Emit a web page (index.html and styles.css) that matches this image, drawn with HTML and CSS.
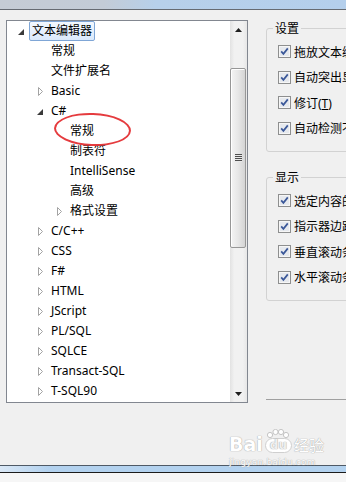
FILE: index.html
```html
<!DOCTYPE html>
<html lang="zh-CN">
<head>
  <meta charset="UTF-8">
  <title>选项 - 文本编辑器</title>
  <link rel="stylesheet" href="styles.css">
</head>
<body>

<svg class="defs" width="0" height="0">
  <symbol id="chk" viewBox="0 0 13 13">
    <rect x="0.5" y="0.5" width="12" height="12" fill="#f6f6f6" stroke="#8e8f8f"/>
    <rect x="2" y="2" width="9" height="9" fill="#e6e9ee"/>
    <path d="M3.2 6.4 L5.4 8.9 L9.8 3.4" fill="none" stroke="#3b5899" stroke-width="1.7"/>
  </symbol>
  <symbol id="open" viewBox="0 0 6 6">
    <polygon points="6,0 6,6 0,6" fill="#3a3a3a"/>
  </symbol>
  <symbol id="closed" viewBox="0 0 5 9">
    <polygon points="0.5,0.5 4.5,4.5 0.5,8.5" fill="none" stroke="#a3a3a3"/>
  </symbol>
</svg>

<div class="titlebar"></div>

<div class="main">
  <div class="tree">
    <ul class="nodes">
      <li class="node"><span class="toggle"><svg class="tri-open"><use href="#open"/></svg></span><span class="label selected">文本编辑器</span></li>
      <li class="node lvl1"><span class="toggle"></span><span class="label">常规</span></li>
      <li class="node lvl1"><span class="toggle"></span><span class="label">文件扩展名</span></li>
      <li class="node lvl1"><span class="toggle"><svg class="tri-closed"><use href="#closed"/></svg></span><span class="label">Basic</span></li>
      <li class="node lvl1"><span class="toggle"><svg class="tri-open"><use href="#open"/></svg></span><span class="label">C#</span></li>
      <li class="node lvl2"><span class="toggle"></span><span class="label">常规</span></li>
      <li class="node lvl2"><span class="toggle"></span><span class="label">制表符</span></li>
      <li class="node lvl2"><span class="toggle"></span><span class="label">IntelliSense</span></li>
      <li class="node lvl2"><span class="toggle"></span><span class="label">高级</span></li>
      <li class="node lvl2"><span class="toggle"><svg class="tri-closed"><use href="#closed"/></svg></span><span class="label">格式设置</span></li>
      <li class="node lvl1"><span class="toggle"><svg class="tri-closed"><use href="#closed"/></svg></span><span class="label">C/C++</span></li>
      <li class="node lvl1"><span class="toggle"><svg class="tri-closed"><use href="#closed"/></svg></span><span class="label">CSS</span></li>
      <li class="node lvl1"><span class="toggle"><svg class="tri-closed"><use href="#closed"/></svg></span><span class="label">F#</span></li>
      <li class="node lvl1"><span class="toggle"><svg class="tri-closed"><use href="#closed"/></svg></span><span class="label">HTML</span></li>
      <li class="node lvl1"><span class="toggle"><svg class="tri-closed"><use href="#closed"/></svg></span><span class="label">JScript</span></li>
      <li class="node lvl1"><span class="toggle"><svg class="tri-closed"><use href="#closed"/></svg></span><span class="label">PL/SQL</span></li>
      <li class="node lvl1"><span class="toggle"><svg class="tri-closed"><use href="#closed"/></svg></span><span class="label">SQLCE</span></li>
      <li class="node lvl1"><span class="toggle"><svg class="tri-closed"><use href="#closed"/></svg></span><span class="label">Transact-SQL</span></li>
      <li class="node lvl1"><span class="toggle"><svg class="tri-closed"><use href="#closed"/></svg></span><span class="label">T-SQL90</span></li>
    </ul>

    <div class="scrollbar">
      <div class="sb-btn"><svg width="7" height="4"><polygon points="3.5,0 7,4 0,4" fill="#1e1e1e"/></svg></div>
      <div class="sb-track">
        <div class="sb-thumb"><span class="grip"></span></div>
      </div>
      <div class="sb-btn"><svg width="7" height="4"><polygon points="0,0 7,0 3.5,4" fill="#1e1e1e"/></svg></div>
    </div>

    <!-- red annotation circle -->
    <div class="mark"></div>
  </div>

  <div class="options">
    <fieldset class="group">
      <legend>设置</legend>
      <div class="opt"><svg class="check"><use href="#chk"/></svg><span>拖放文本编辑(<u>D</u>)</span></div>
      <div class="opt"><svg class="check"><use href="#chk"/></svg><span>自动突出显示分隔符(<u>A</u>)</span></div>
      <div class="opt"><svg class="check"><use href="#chk"/></svg><span>修订(<u>T</u>)</span></div>
      <div class="opt"><svg class="check"><use href="#chk"/></svg><span>自动检测不带签名的 UTF-8 编码</span></div>
    </fieldset>

    <fieldset class="group second">
      <legend>显示</legend>
      <div class="opt"><svg class="check"><use href="#chk"/></svg><span>选定内容的虚拟空间</span></div>
      <div class="opt"><svg class="check"><use href="#chk"/></svg><span>指示器边距(<u>I</u>)</span></div>
      <div class="opt"><svg class="check"><use href="#chk"/></svg><span>垂直滚动条(<u>V</u>)</span></div>
      <div class="opt"><svg class="check"><use href="#chk"/></svg><span>水平滚动条(<u>H</u>)</span></div>
    </fieldset>

    <div class="rule"></div>
  </div>

  <div class="watermark">
    <div class="wm-logo">
      <span class="wm-bai">Bai</span>
      <span class="paw">
        <svg width="22" height="9"><circle cx="3" cy="6" r="2.6"/><circle cx="8.5" cy="3" r="2.6"/><circle cx="14" cy="3" r="2.6"/><circle cx="19" cy="6" r="2.6"/></svg>
        <span class="wm-du">du</span>
      </span>
      <span class="wm-jy">经验</span>
    </div>
    <div class="wm-url">jingyan.baidu.com</div>
  </div>
</div>

<div class="taskbar"></div>
<div class="status"></div>

</body>
</html>
```

FILE: styles.css
```css
body {
  margin: 0;
  width: 346px;
  height: 482px;
  overflow: hidden;
  background: #f0f0f0;
  font-family: "Noto Sans", "Noto Sans CJK SC", sans-serif;
  font-size: 12px;
  color: #000;
  display: flex;
  flex-direction: column;
}
.defs {
  position: absolute;
}
.titlebar {
  flex: none;
  height: 9px;
  border-bottom: 1px solid #666b72;
  background: linear-gradient(to right, #c5ccd5 0, #c3ccd7 30%, #b7d0ea 45%, #b4cfec 100%);
}
.main {
  position: relative;
  flex: none;
  height: 455px;
  display: flex;
}

/* tree view */
.tree {
  position: relative;
  margin: 10px 0 0 6px;
  width: 240px;
  height: 381px;
  border: 1px solid #828790;
  background: #fff;
  display: flex;
  flex: none;
}
.nodes {
  list-style: none;
  margin: 0;
  padding: 0;
  flex: 1;
}
.node {
  display: flex;
  align-items: center;
  height: 20px;
  white-space: nowrap;
}
.lvl1 {
  padding-left: 19px;
}
.lvl2 {
  padding-left: 38px;
}
.toggle {
  width: 22px;
  height: 20px;
  box-sizing: border-box;
  padding-left: 11px;
  display: flex;
  align-items: center;
  flex: none;
}
.tri-open {
  width: 6px;
  height: 6px;
  margin-top: 1px;
}
.tri-closed {
  width: 5px;
  height: 9px;
  margin-left: 1px;
}
.label {
  border: 1px solid transparent;
  border-radius: 2px;
  padding: 0 2px;
  height: 18px;
  line-height: 18px;
}
.label.selected {
  border-color: #7fa6d6;
  background: linear-gradient(#f3f8fe, #dae9fb);
}
.mark {
  position: absolute;
  left: 47px;
  top: 92px;
  width: 73px;
  height: 29px;
  border: 2.5px solid #e53b3e;
  border-radius: 50%;
  transform: rotate(2deg);
}

/* scrollbar */
.scrollbar {
  width: 17px;
  flex: none;
  display: flex;
  flex-direction: column;
  background: linear-gradient(to right, #e2e2e2, #f1f1f1 25%, #f1f1f1 75%, #e7e7e7);
}
.sb-btn {
  height: 17px;
  display: flex;
  align-items: center;
  justify-content: center;
}
.sb-track {
  flex: 1;
  padding: 30px 1px 0 0;
}
.sb-thumb {
  height: 178px;
  border: 1px solid #979797;
  border-radius: 2px;
  background: linear-gradient(to right, #f4f4f4, #e7e7e7 50%, #d4d4d4);
  box-shadow: inset 1px 1px 0 #fff;
  display: flex;
  align-items: center;
  justify-content: center;
}
.grip {
  width: 7px;
  height: 8px;
  background: repeating-linear-gradient(#4e4e4e 0 1px, #e8e8e8 1px 2px);
}

/* option groups, cut off by the window edge */
.options {
  flex: none;
  width: 80px;
  overflow: hidden;
  margin: 11px 0 0 18px;
}
.group {
  margin: 0;
  padding: 3px 0 10px;
  border: 1px solid #d2d2d2;
  border-radius: 3px;
  width: 218px;
}
.group legend {
  margin-left: 6px;
  padding: 0 2px;
  line-height: 15px;
}
.group.second {
  margin-top: 18px;
}
.opt {
  display: flex;
  align-items: center;
  gap: 3px;
  height: 25.5px;
  padding-left: 11px;
  white-space: nowrap;
}
.check {
  width: 13px;
  height: 13px;
  flex: none;
}
.rule {
  margin-top: 98px;
  border-top: 1px solid #a0a0a0;
  width: 218px;
}

/* watermark */
.watermark {
  position: absolute;
  left: 229px;
  top: 419px;
  color: #fff;
  font-family: "DejaVu Sans", sans-serif;
  text-shadow: 0 0 1px #a9a9a9, 0 0 1px #a9a9a9;
}
.wm-logo {
  display: flex;
  align-items: flex-end;
}
.wm-bai {
  font-size: 19px;
  font-weight: bold;
  line-height: 18px;
}
.paw {
  display: flex;
  flex-direction: column;
  align-items: center;
  margin: 0 2px;
}
.paw svg {
  fill: #fff;
  stroke: #c4c4c4;
}
.wm-du {
  background: #fff;
  color: #f0f0f0;
  border: 1px solid #cfcfcf;
  border-radius: 9px;
  font-size: 12px;
  font-weight: bold;
  line-height: 13px;
  padding: 0 4px;
}
.wm-jy {
  font-family: "Noto Sans CJK SC", sans-serif;
  font-size: 15px;
  line-height: 17px;
}
.wm-url {
  font-size: 9px;
  margin-top: 4px;
  letter-spacing: 0.2px;
}

/* bottom edge */
.taskbar {
  flex: none;
  height: 6px;
  border-top: 1px solid #4f5a66;
  border-bottom: 1px solid #1c1c1c;
  background: linear-gradient(to right, #dae8f6, #b3d2ef 14%, #b3d2ef);
}
.status {
  flex: 1;
  background: #f6f6f6;
}
```
